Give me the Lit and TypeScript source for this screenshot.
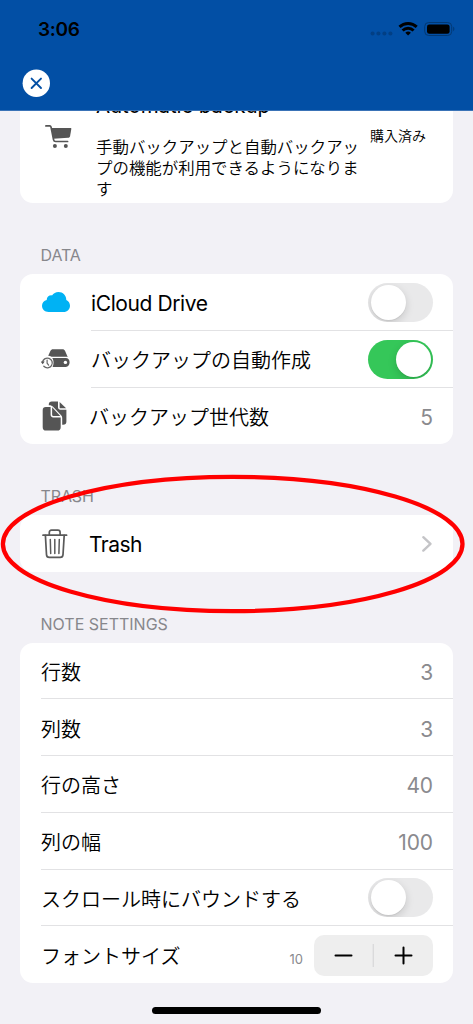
import { LitElement, html, css, svg, nothing, TemplateResult } from "lit";
import { customElement, property } from "lit/decorators.js";

const icons: Record<string, TemplateResult> = {
  cart: html`<svg width="28" height="25" viewBox="0 0 28 25">
    <path d="M0.900 1.900H4.800C5.500 1.900 5.800 2.300 6 2.900L8.600 15.800C8.800 16.900 9.500 17.500 10.600 17.500H22.600" fill="none" stroke="#555" stroke-width="1.700" stroke-linecap="round" stroke-linejoin="round"/>
    <path d="M6.200 4H25.500C26.100 4 26.400 4.400 26.300 5L25.100 12C24.900 13.100 24.200 13.700 23.100 13.800L8.300 14.800Z" fill="#555"/>
    <circle cx="9.900" cy="22" r="2" fill="#555"/><circle cx="20.800" cy="22" r="2" fill="#555"/></svg>`,
  cloud: html`<svg width="28" height="20" viewBox="0 0 28 20">
    <path d="M6.600 20C2.800 20 0 17.400 0 13.800C0 10.900 1.900 8.600 4.700 7.900C4.700 5.200 7 3.100 10 3.400C11.500 1.300 13.800 0 16.500 0C20.900 0 24.300 3.500 24.300 8C26.600 9.100 28 11.200 28 13.700C28 17.200 25.200 20 21.600 20Z" fill="#00b2f4"/></svg>`,
  drive: html`<svg width="30" height="22" viewBox="0 0 30 22">
    <path d="M9.400 3C10 1.700 10.800 1.200 12.100 1.200H21.400C22.700 1.200 23.500 1.700 24.100 3L26.700 9C26.100 8.800 25.300 8.700 24.600 8.700H10.600C9.500 8 8.400 7.700 7.200 7.700Z" fill="#555"/>
    <path d="M11.300 10H24.800C27.200 10 28.600 11.600 28.600 14.300C28.600 17 27.200 18.900 24.800 18.900H11.600C13 16 12.900 12.500 11.300 10Z" fill="#555"/>
    <circle cx="24.400" cy="14.400" r="1.700" fill="#fff"/>
    <path d="M1.500 14.600A4.900 4.900 0 1 1 2.800 18.300" fill="none" stroke="#666" stroke-width="1.300" stroke-linecap="round"/>
    <path d="M-.300 13.500H3.700L1.700 16.200Z" fill="#555"/>
    <path d="M6.100 12V15.200L7.600 17.200" fill="none" stroke="#666" stroke-width="1.200" stroke-linecap="round" stroke-linejoin="round"/></svg>`,
  copy: html`<svg width="26" height="30" viewBox="0 0 26 30">
    <path d="M6.800 4.300V3.200C6.800 1.400 8 .4 9.700.4H16V6.200C16 7.700 16.900 8.700 18.400 8.700H24.400V20.500C24.400 22.700 23.300 23.800 21.100 23.800H20.200V17.200C20.200 15.800 19.900 14.900 18.900 13.900L11.300 6C10.200 4.800 9 4.300 7.400 4.300Z" fill="#555"/>
    <path d="M17.600.9L24.100 7.300H18.500C17.900 7.300 17.600 6.900 17.600 6.400Z" fill="#555"/>
    <path d="M3.800 6H8.600V13.600C8.600 15.500 9.400 16.400 11.300 16.400H18.700V26.200C18.700 28.500 17.500 29.600 15.300 29.600H4.100C1.800 29.600.7 28.500.7 26.200V9.300C.7 7.100 1.800 6 3.800 6Z" fill="#555"/>
    <path d="M10.100 6.300L18.300 14.900H11.200C10.400 14.900 10.100 14.500 10.100 13.800Z" fill="#555"/></svg>`,
  trash: html`<svg width="26" height="30" viewBox="0 0 26 30">
    <g fill="none" stroke="#5a5a5a" stroke-width="1.700" stroke-linecap="round" stroke-linejoin="round">
    <path d="M1 6.200H24.600M7.300 5.800V3.400C7.300 1.900 8.100 1.200 9.500 1.200H15.900C17.300 1.200 18.100 1.900 18.100 3.400V5.800"/>
    <path d="M3.400 6.400L4.500 25.600C4.600 27.400 5.600 28.300 7.300 28.300H18.200C19.900 28.300 20.900 27.400 21 25.600L22.200 6.400"/>
    <path d="M8.300 10.500L8.700 24.500M12.800 10.500V24.500M17.300 10.500L16.900 24.500" stroke-width="1.500"/></g></svg>`,
};

@customElement("ios-switch")
class IosSwitch extends LitElement {
  @property({ type: Boolean, reflect: true }) on = false;
  static styles = css`
    :host { display: flex; box-sizing: border-box; width: 65px; height: 39px; padding: 2px 2.500px;
      border-radius: 20px; background: #e9e9ea; flex: none; overflow: hidden; }
    :host([on]) { background: #35c759; justify-content: flex-end; }
    .knob { width: 35px; height: 35px; border-radius: 50%; background: #fff;
      box-shadow: 0 3px 8px rgba(0, 0, 0, 0.15), 0 1px 1px rgba(0, 0, 0, 0.06); }
  `;
  render() {
    return html`<span class="knob"></span>`;
  }
}

type Row = { label: string; icon?: string; value?: string; sw?: boolean; latin?: boolean; inset?: boolean };

const dataRows: Row[] = [
  { label: "iCloud Drive", icon: "cloud", sw: false, latin: true, inset: true },
  { label: "バックアップの自動作成", icon: "drive", sw: true, inset: true },
  { label: "バックアップ世代数", icon: "copy", value: "5" },
];
const noteRows: Row[] = [
  { label: "行数", value: "3" },
  { label: "列数", value: "3" },
  { label: "行の高さ", value: "40" },
  { label: "列の幅", value: "100" },
  { label: "スクロール時にバウンドする", sw: false },
];

@customElement("app-root")
class AppRoot extends LitElement {
  static styles = css`
    :host { display: flex; flex-direction: column; position: relative; width: 473px; height: 1024px;
      overflow: hidden; background: #f2f1f6; color: #000;
      font-family: Inter, "Noto Sans CJK JP", sans-serif; }
    * { box-sizing: border-box; }
    svg { display: block; flex: none; }
    header { height: 111px; flex: none; background: #024fa5; border-bottom: 1px solid #3a73b7; }
    .status { display: flex; align-items: center; height: 58px; padding: 0 17px 0 38px; }
    .time { flex: 1; font-size: 19px; font-weight: 600; letter-spacing: -0.35px; line-height: 24px; padding-top: 1px; }
    .nav { padding: 11px 0 0 22px; }
    main { flex: 1; min-height: 0; overflow: hidden; padding: 0 20px; display: flex; flex-direction: column; }
    .card { background: #fff; border-radius: 13px; flex: none; }
    .purchase { margin-top: -24px; height: 116px; display: flex; padding-top: 4px; }
    .purchase .pic { padding: 33px 0 0 25px; width: 76px; }
    .about { width: 274px; }
    .title { padding-top: 2px; font-size: 20.500px; line-height: 26px; letter-spacing: -0.1px; }
    .desc { margin-top: 17px; font-family: "Noto Sans CJK JP", sans-serif; font-weight: 350;
      font-size: 16.45px; line-height: 21px; white-space: nowrap; }
    .state { padding-top: 34px; font: 350 14px/20px "Noto Sans CJK JP", sans-serif; }
    h2 { margin: 42px 0 9px; padding: 0 20.500px; font-size: 16px; line-height: 20px; font-weight: 400;
      color: #87878c; flex: none; }
    .h-data { letter-spacing: -0.1px; }
    .h-trash { letter-spacing: -0.1px; }
    .h-note { margin-bottom: 8.500px; letter-spacing: 0; }
    .row { display: flex; align-items: center; height: 56.75px; padding-right: 20px; padding-left: 21px;
      background-repeat: no-repeat; }
    .line { background-image: linear-gradient(#e2e2e4, #e2e2e4); background-size: 100% 1px;
      background-position: 21px 100%; }
    .line.inset { background-position: 71px 100%; }
    .icon { width: 48px; display: flex; }
    .inset .icon { width: 50px; }
    .icon.cloud { padding-left: 1px; }
    .icon.copy { padding-left: 1px; }
    .icon.trash { padding-left: 1px; }
    .label { flex: 1; white-space: nowrap; font-family: "Noto Sans CJK JP", sans-serif; font-weight: 350;
      font-size: 20px; line-height: 28px; padding-top: 2px; }
    .label.latin { font-family: Inter, sans-serif; font-weight: 400; font-size: 21px; letter-spacing: -0.4px; padding-top: 4px; }
    .icon.trash + .label.latin { padding-top: 3px; letter-spacing: -0.55px; }
    .value { font-size: 21px; color: #8a8a8e; letter-spacing: -0.1px; padding-top: 3px; }
    .small { font-size: 13px; color: #8a8a8e; margin: 8px 11px 0 0; }
    .stepper { display: flex; align-items: center; width: 119px; height: 41px; margin-top: 1px; border-radius: 10px; background: #eee; }
    .ring { position: absolute; left: 0; top: 473px; }
    .home { position: absolute; left: 152px; top: 1007px; width: 169px; height: 7px; border-radius: 4px; background: #000; }
  `;

  row(r: Row, last = false) {
    return html`<div class="row ${last ? "" : "line"} ${r.inset ? "inset" : ""}">
      ${r.icon ? html`<span class="icon ${r.icon}">${icons[r.icon]}</span>` : nothing}
      <span class="label ${r.latin ? "latin" : ""}">${r.label}</span>
      ${r.value ? html`<span class="value">${r.value}</span>` : nothing}
      ${r.sw !== undefined ? html`<ios-switch ?on=${r.sw}></ios-switch>` : nothing}
    </div>`;
  }

  render() {
    return html`
      <header>
        <div class="status">
          <span class="time">3:06</span>
          <svg width="86" height="18" viewBox="0 0 86 18">
            ${[2.6, 8.4, 14.4, 20.4].map((x) => svg`<circle cx=${x} cy="13.500" r="2" fill="#023f84"/>`)}
            <g fill="none" stroke="#000" stroke-width="2.900">
              <path d="M29.500 6.900A12.400 12.400 0 0 1 46.700 6.900"/>
              <path d="M32.600 10.500A7.900 7.900 0 0 1 43.600 10.500"/>
            </g>
            <path d="M35.300 12.800A4.300 4.300 0 0 1 40.900 12.800L38.100 15.600Z"/>
            <rect x="54.700" y="2.500" width="27" height="13" rx="4" fill="none" stroke="#023873"/>
            <rect x="57" y="4.500" width="22.600" height="9.300" rx="2.300"/>
            <path d="M83.200 6.800C84.700 7.300 84.700 10.700 83.200 11.200Z" fill="#023873"/>
          </svg>
        </div>
        <div class="nav">
          <svg width="28" height="28" viewBox="0 0 28 28"><circle cx="14.300" cy="14.300" r="13.700" fill="#fff"/>
            <path d="M9.600 9.600L19 19M19 9.600L9.600 19" stroke="#024fa5" stroke-width="1.900" stroke-linecap="round"/></svg>
        </div>
      </header>
      <main>
        <section class="card purchase">
          <div class="pic">${icons.cart}</div>
          <div class="about">
            <div class="title">Automatic backup</div>
            <div class="desc">手動バックアップと自動バックアッ<br>プの機能が利用できるようになりま<br>す</div>
          </div>
          <div class="state">購入済み</div>
        </section>
        <h2 class="h-data">DATA</h2>
        <section class="card">${dataRows.map((r, i) => this.row(r, i === 2))}</section>
        <h2 class="h-trash">TRASH</h2>
        <section class="card">
          <div class="row">
            <span class="icon trash">${icons.trash}</span><span class="label latin">Trash</span>
            <svg width="12" height="18" viewBox="0 0 12 18"><path d="M2.300 2.200L9.500 8.900L2.300 15.600" fill="none" stroke="#c4c4c7" stroke-width="2.400" stroke-linecap="round" stroke-linejoin="round"/></svg>
          </div>
        </section>
        <h2 class="h-note">NOTE SETTINGS</h2>
        <section class="card">
          ${noteRows.map((r) => this.row(r))}
          <div class="row">
            <span class="label">フォントサイズ</span><span class="small">10</span>
            <span class="stepper"><svg width="119" height="41" viewBox="0 0 119 41">
              <path d="M21.500 20.500H37.500M81.500 20.500H97.500M89.500 12.500V28.500" stroke="#000" stroke-width="2" stroke-linecap="round"/>
              <path d="M59.300 9V32" stroke="#d8d8da" stroke-width="1.300"/></svg></span>
          </div>
        </section>
      </main>
      <svg class="ring" width="473" height="142" viewBox="0 0 473 142">
        <ellipse cx="232.700" cy="71" rx="229.800" ry="67.100" fill="none" stroke="#f00" stroke-width="4.300"/></svg>
      <div class="home"></div>
    `;
  }
}
